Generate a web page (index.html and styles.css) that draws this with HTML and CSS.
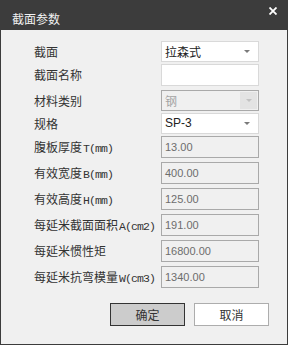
FILE: index.html
```html
<!DOCTYPE html>
<html lang="zh">
<head>
  <meta charset="UTF-8">
  <title>截面参数</title>
  <link rel="stylesheet" href="styles.css">
</head>
<body>
  <div class="dialog">
    <div class="title-bar">
      <span class="title">截面参数</span>
      <svg class="close" width="8" height="8" viewBox="0 0 8 8">
        <path d="M0.5 0.5L7.5 7.5M7.5 0.5L0.5 7.5" stroke="#fff" stroke-width="1.8"/>
      </svg>
    </div>

    <div class="form">
      <div class="row combo-row">
        <label>截面</label>
        <div class="combo"><span>拉森式</span><i class="arrow"></i></div>
      </div>
      <div class="row">
        <label>截面名称</label>
        <div class="input"></div>
      </div>
      <div class="row combo-row">
        <label>材料类别</label>
        <div class="combo disabled"><span>钢</span><b class="drop"><i class="arrow"></i></b></div>
      </div>
      <div class="row combo-row">
        <label>规格</label>
        <div class="combo"><span class="latin">SP-3</span><i class="arrow"></i></div>
      </div>
      <div class="row">
        <label>腹板厚度<span class="unit">T(mm)</span></label>
        <div class="input readonly">13.00</div>
      </div>
      <div class="row">
        <label>有效宽度<span class="unit">B(mm)</span></label>
        <div class="input readonly">400.00</div>
      </div>
      <div class="row">
        <label>有效高度<span class="unit">H(mm)</span></label>
        <div class="input readonly">125.00</div>
      </div>
      <div class="row">
        <label>每延米截面面积<span class="unit">A(cm2)</span></label>
        <div class="input readonly">191.00</div>
      </div>
      <div class="row">
        <label>每延米惯性矩</label>
        <div class="input readonly">16800.00</div>
      </div>
      <div class="row">
        <label>每延米抗弯模量<span class="unit">W(cm3)</span></label>
        <div class="input readonly">1340.00</div>
      </div>
    </div>

    <div class="buttons">
      <button class="btn primary">确定</button>
      <button class="btn">取消</button>
    </div>
  </div>
</body>
</html>
```

FILE: styles.css
```css
html, body {
  margin: 0;
  padding: 0;
  background: #3c3c3c;
}

.dialog {
  width: 288px;
  height: 345px;
  box-sizing: border-box;
  border: 1px solid #3c3c3c;
  border-top: 0;
  background: #f0f0f0;
  font-family: "Noto Sans CJK SC", "Noto Sans", sans-serif;
  font-size: 12px;
  color: #333;
}

.title-bar {
  height: 30px;
  margin: 0 -1px;
  background: #3c3c3c;
  display: flex;
  justify-content: space-between;
  box-sizing: border-box;
  padding: 11px 11px 0 12px;
}

.title {
  color: #f2f2f2;
  font-size: 12px;
  line-height: 16px;
}

.close {
  margin-top: -4px;
}

.form {
  padding: 11px 0 0 33px;
}

.row {
  display: flex;
  align-items: flex-start;
  height: 26px;
}

.combo-row {
  height: 23px;
}

.row label {
  width: 127px;
  height: 22px;
  line-height: 22px;
  white-space: nowrap;
}

.combo-row label {
  height: 21px;
  line-height: 21px;
}

.unit {
  font-family: "Liberation Mono", monospace;
  font-size: 11.5px;
  letter-spacing: -0.9px;
  margin-left: 1px;
}

.combo, .input {
  width: 98px;
  box-sizing: border-box;
  border: 1px solid #d9d9d9;
  background: #fff;
  padding-left: 3px;
  color: #222;
}

.combo {
  height: 21px;
  line-height: 19px;
  display: flex;
  justify-content: space-between;
  align-items: center;
}

.latin {
  font-family: "Liberation Sans", sans-serif;
  font-size: 12px;
}

.arrow {
  width: 0;
  height: 0;
  border-left: 3px solid transparent;
  border-right: 3px solid transparent;
  border-top: 3px solid #7a7a7a;
  margin-right: 8px;
}

.combo.disabled {
  border-color: #a9a9a9;
  background: #f0f0f0;
  color: #a3a3a3;
  padding-right: 1px;
}

.drop {
  width: 17px;
  height: 17px;
  background: #e3e3e3;
  display: flex;
  justify-content: center;
  align-items: center;
}

.drop .arrow {
  margin: 0;
  border-top-color: #c2c2c2;
}

.input {
  height: 22px;
  line-height: 20px;
}

.input.readonly {
  border-color: #a9a9a9;
  background: #f0f0f0;
  color: #6d6d6d;
  font-family: "Liberation Sans", sans-serif;
  font-size: 11px;
}

.buttons {
  display: flex;
  justify-content: flex-end;
  gap: 9px;
  padding: 11px 18px 0 0;
}

.btn {
  width: 75px;
  height: 23px;
  margin: 0;
  padding: 0;
  font-family: "Noto Sans CJK SC", sans-serif;
  font-size: 12px;
  color: #333;
  background: #fff;
  border: 1px solid #adadad;
}

.btn.primary {
  background: #cccccc;
  border-color: #333;
}
```
